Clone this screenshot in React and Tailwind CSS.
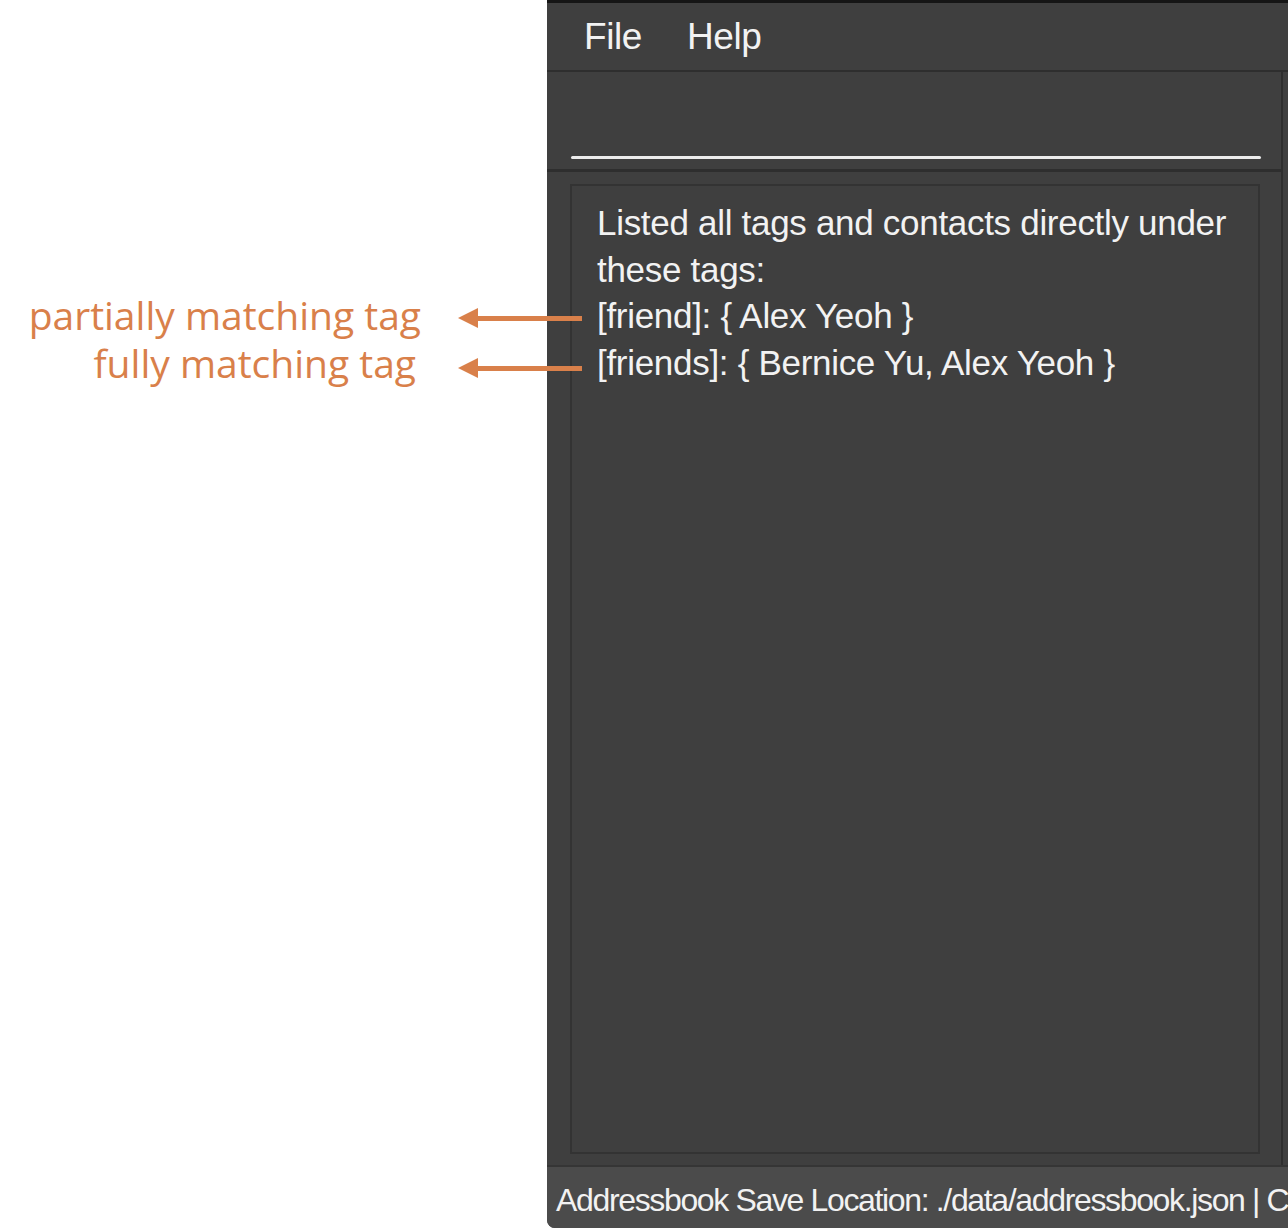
export default function App() {
  const lines = [
    'Listed all tags and contacts directly under',
    'these tags:',
    '[friend]: { Alex Yeoh }',
    '[friends]: { Bernice Yu, Alex Yeoh }',
  ];

  return (
    <div className="relative flex w-[1288px] h-[1228px] bg-white overflow-hidden">
      {/* Annotations */}
      <div className="w-[547px] shrink-0 pt-[291px] pr-[126px] text-right text-[#d9804a] text-[39px] leading-[48px] font-['Open_Sans',sans-serif]">
        <div>partially matching tag</div>
        <div className="pr-[5px]">fully matching tag</div>
      </div>

      {/* App window */}
      <div className="flex-1 flex flex-col bg-[#3f3f3f] border-t-[3px] border-[#151515] rounded-bl-[8px] overflow-hidden text-[#f2f2f2] font-['Liberation_Sans',Arial,sans-serif]">
        {/* Menu bar */}
        <div className="h-[69px] shrink-0 flex items-center gap-[45px] pl-[37px] text-[37px] tracking-[-0.4px] border-b-2 border-[#2e2e2e]">
          <span>File</span>
          <span>Help</span>
        </div>

        <div className="flex-1 flex min-h-0">
          <div className="flex-1 flex flex-col min-w-0">
            {/* Command box */}
            <div className="h-[97px] shrink-0 flex items-end pl-[24px] pr-[20px] pb-[10px]">
              <div className="h-[3px] w-full bg-[#ececec] rounded-full" />
            </div>
            <div className="h-[3px] shrink-0 bg-[#2e2e2e]" />

            {/* Result display */}
            <div className="flex-1 flex pt-[12px] pl-[23px] pr-[21px] pb-[11px]">
              <div className="flex-1 border-2 border-[#333333] pt-[14px] pl-[25px] text-[35px] leading-[46.5px] tracking-[-0.3px]">
                {lines.map((l) => (
                  <div key={l}>{l}</div>
                ))}
              </div>
            </div>
          </div>
          <div className="w-[7px] shrink-0 border-l-2 border-[#2e2e2e]" />
        </div>

        {/* Status bar */}
        <div className="h-[63px] shrink-0 flex items-center pl-[9px] pt-[5px] bg-[#4b4b4b] border-t-2 border-[#353535] text-[32px] tracking-[-1.35px] whitespace-nowrap overflow-hidden">
          Addressbook Save Location: ./data/addressbook.json | C
        </div>
      </div>

      {/* Arrows */}
      {[318, 368].map((y) => (
        <div key={y} className="absolute left-[458px] flex items-center" style={{ top: y - 10 }}>
          <div className="w-0 h-0 border-y-[10px] border-y-transparent border-r-[20px] border-r-[#d9804a]" />
          <div className="w-[104px] h-[5px] bg-[#d9804a]" />
        </div>
      ))}
    </div>
  );
}
